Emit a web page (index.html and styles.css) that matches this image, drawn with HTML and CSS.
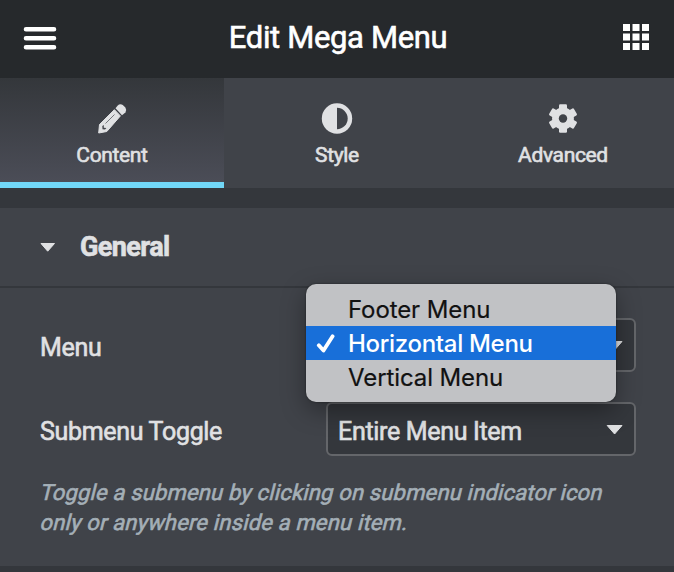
FILE: index.html
```html
<!DOCTYPE html>
<html lang="en">
<head>
<meta charset="utf-8">
<title>Edit Mega Menu</title>
<link rel="stylesheet" href="styles.css">
</head>
<body>
<header class="header">
  <svg class="burger" viewBox="0 0 34 24"><path d="M3 2.300h28M3 11.300h28M3 20.300h28" stroke="#fff" stroke-width="4.600" stroke-linecap="round"/></svg>
  <h1 class="title"><span>Edit Mega Menu</span></h1>
  <svg class="apps" viewBox="0 0 26 26" fill="#fff"><path d="M0 0h7v7H0zM9.5 0h7v7h-7zM19 0h7v7h-7zM0 9.5h7v7H0zM9.5 9.5h7v7h-7zM19 9.5h7v7h-7zM0 19h7v7H0zM9.5 19h7v7h-7zM19 19h7v7h-7z"/></svg>
</header>
<nav class="tabs">
  <a class="tab active">
    <svg class="tab-icon" viewBox="0 0 32 32"><path d="M2.700 30l.8-8.500L18.400 6.700l6 6.200L10.800 28.500z" fill="#e0e1e3" stroke="#e0e1e3" stroke-width="1" stroke-linejoin="round"/><path d="M19.500 5.300l2-2.600Q24 .3 26.800 2l2.600 2.600Q31 7.200 29.400 9.600L26 12.200z" fill="#e0e1e3"/><path d="M9.500 20.500l9-9" stroke="#74767b" stroke-width="1"/><path d="M6.300 23l1.500-1v2.800l2.600.2-1.400 1.600-2.500-.4z" fill="#44464c"/></svg>
    <span>Content</span>
  </a>
  <a class="tab">
    <svg class="tab-icon" viewBox="0 0 32 32"><circle cx="16" cy="15.500" r="15.200" fill="#e0e1e3"/><path d="M16 4.800a10.700 10.700 0 0 1 0 21.400z" fill="#404349"/></svg>
    <span>Style</span>
  </a>
  <a class="tab">
    <svg class="tab-icon" viewBox="0 0 32 32"><g fill="#e0e1e3"><circle cx="16" cy="15.500" r="10.900"/><rect x="12" y="1.200" width="8" height="28.600" rx="1.200"/><rect x="12" y="1.200" width="8" height="28.600" rx="1.200" transform="rotate(60 16 15.500)"/><rect x="12" y="1.200" width="8" height="28.600" rx="1.200" transform="rotate(120 16 15.500)"/></g><circle cx="16" cy="15.500" r="4.200" fill="#404349"/></svg>
    <span>Advanced</span>
  </a>
</nav>
<main class="section">
  <div class="section-head">
    <svg class="caret" viewBox="0 0 16 10"><path d="M1 1.500h13.500L7.700 9.200z" fill="#e0e1e3" stroke="#e0e1e3" stroke-linejoin="round"/></svg>
    <h2 class="section-title"><span>General</span></h2>
  </div>
  <div class="controls">
    <div class="row">
      <label class="label"><span>Menu</span></label>
      <div class="select">
        <svg class="caret" viewBox="0 0 18 11"><path d="M1.200 1.500h14.800L8.600 10z" fill="#e0e1e3" stroke="#e0e1e3" stroke-linejoin="round"/></svg>
        <ul class="popup">
          <li><span>Footer Menu</span></li>
          <li class="selected"><svg class="check" viewBox="0 0 20 20"><path d="M2.800 12.300l4.700 5.200L16.600 3.300" fill="none" stroke="#fff" stroke-width="3.800" stroke-linecap="round" stroke-linejoin="round"/></svg><span>Horizontal Menu</span></li>
          <li><span>Vertical Menu</span></li>
        </ul>
      </div>
    </div>
    <div class="row">
      <label class="label"><span>Submenu Toggle</span></label>
      <div class="select">
        <span>Entire Menu Item</span>
        <svg class="caret" viewBox="0 0 18 11"><path d="M1.200 1.500h14.800L8.600 10z" fill="#e0e1e3" stroke="#e0e1e3" stroke-linejoin="round"/></svg>
      </div>
    </div>
    <p class="description"><span>Toggle a submenu by clicking on submenu indicator icon</span> <span>only or anywhere inside a menu item.</span></p>
  </div>
</main>
</body>
</html>
```
FILE: styles.css
```css
* { box-sizing: border-box; margin: 0; padding: 0; }
body {
  width: 674px; height: 572px; overflow: hidden;
  background: #34373c; color: #e0e1e3;
  font-family: Roboto, "Liberation Sans", sans-serif;
  -webkit-text-stroke-width: .6px;
}
.header {
  height: 78px; padding: 0 25px 0 23px;
  display: flex; align-items: center; justify-content: space-between;
  background: #26292c; color: #fff;
}
.burger { width: 34px; height: 24px; }
.apps { width: 26px; height: 26px; margin-top: -4px; }
.title { font-size: 31px; font-weight: 400; line-height: 36px; margin: -3px 4px 0 0; letter-spacing: -.35px; }
.tabs { height: 110px; display: grid; grid-template-columns: 224px 226px 224px; background: #404349; }
.tab {
  display: flex; flex-direction: column; align-items: center;
  padding-top: 25px; font-size: 21px; font-weight: 400; line-height: 24px; letter-spacing: -.35px;
}
.tab:last-child { padding-left: 2px; }
.tab.active { background: linear-gradient(#34373b, #4b4d57); border-bottom: 6px solid #71d7f7; }
.tab-icon { width: 32px; height: 32px; margin-bottom: 8px; }
.section { margin-top: 20px; height: 358px; background: #404349; }
.section-head {
  height: 80px; padding-left: 40px; display: flex; align-items: center; gap: 24px;
  border-bottom: 2px solid #34373c;
}
.section-title { font-size: 27px; font-weight: 700; line-height: 32px; letter-spacing: -.6px; }
.caret { width: 16px; height: 10px; }
.controls { padding: 30px 38px 0 40px; }
.row { display: flex; justify-content: space-between; align-items: center; height: 54px; margin-bottom: 30px; }
.label, .select { font-size: 25px; font-weight: 400; line-height: 30px; letter-spacing: -.32px; }
.label { padding-top: 6px; }
.select {
  position: relative; width: 310px; height: 54px; padding: 6px 10px 0 10px;
  display: flex; align-items: center; justify-content: space-between;
  background: #34373c; border: 2px solid #64666a; border-radius: 6px;
}
.select > .caret { margin: -6px 0 0 auto; width: 18px; height: 11px; }
.popup {
  position: absolute; z-index: 1; left: -22px; top: -36px; width: 310px; height: 118px;
  padding: 8px 0; list-style: none; border-radius: 10px;
  background: #c1c2c5; color: #111;
  box-shadow: 0 0 2px rgba(0,0,0,.5), 0 8px 24px rgba(0,0,0,.36);
  font: 400 24px/34px Inter, "Liberation Sans", sans-serif;
  letter-spacing: -.1px; -webkit-text-stroke-width: .2px;
}
.popup li { height: 34px; padding: 2px 0 0 42px; display: flex; align-items: center; position: relative; white-space: nowrap; }
.popup .selected { background: #186fd9; color: #fff; font-weight: 500; letter-spacing: -.3px; -webkit-text-stroke-width: 0; }
.check { position: absolute; left: 10px; top: 7px; width: 20px; height: 20px; }
.description { margin: -8px 0 0 1px; font-size: 22px; line-height: 30px; color: #a4afb7; white-space: nowrap; letter-spacing: .16px; }
.description span { display: block; transform: skewX(-14deg); }
```
